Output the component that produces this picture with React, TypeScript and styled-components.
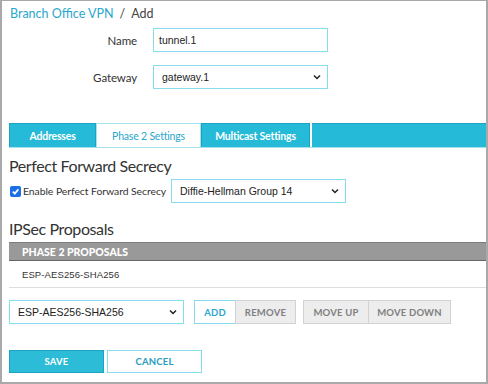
import React from "react";
import styled, { createGlobalStyle } from "styled-components";

const Global = createGlobalStyle`
  html, body { margin: 0; padding: 0; background: #fff; }
  body { font-family: Lato, "Liberation Sans", Arial, sans-serif; color: #333; }
  * { box-sizing: border-box; }
`;

const CYAN = "#25bad7";
const CYAN_DARK = "#1ba3c1";
const FIELD_BORDER = "#86dcec";

const Frame = styled.div`
  width: 488px;
  height: 384px;
  border: 2px solid #a9a9a9;
  border-top-width: 1px;
  padding-left: 7px;
  display: flex;
  flex-direction: column;
  overflow: hidden;
  & > * { flex-shrink: 0; }
`;

const Breadcrumb = styled.div`
  height: 24px;
  display: flex;
  align-items: center;
  gap: 6px;
  font-size: 12.5px;
  white-space: nowrap;
  padding-left: 1px;
`;

const Crumb = styled.span<{ $link?: boolean }>`
  color: ${(p) => (p.$link ? "#2aa7cc" : "#444")};
`;

const FormGrid = styled.div`
  display: grid;
  grid-template-columns: 128px 175px;
  column-gap: 16px;
  row-gap: 13px;
  margin-top: 3px;
`;

const Label = styled.label`
  font-size: 11.5px;
  letter-spacing: -0.1px;
  color: #333;
  text-align: right;
  align-self: center;
  white-space: nowrap;
`;

const TextInput = styled.div<{ $w?: number; $pl?: number }>`
  height: 24px;
  width: ${(p) => p.$w ?? 175}px;
  border: 1px solid ${FIELD_BORDER};
  display: flex;
  align-items: center;
  padding-left: ${(p) => p.$pl ?? 5}px;
  font-family: "Liberation Sans", Arial, sans-serif;
  font-size: 10.5px;
  color: #222;
  background: #fff;
  white-space: nowrap;
`;

const SelectBox = styled(TextInput)`
  justify-content: space-between;
  padding-right: 6px;
`;

const Chevron = () => (
  <svg width="8" height="6" viewBox="0 0 8 6">
    <path d="M1 1.5 L4 4.5 L7 1.5" fill="none" stroke="#222" strokeWidth="1.5" />
  </svg>
);

const Select: React.FC<{ value: string; w?: number; pl?: number }> = ({ value, w, pl }) => (
  <SelectBox $w={w} $pl={pl ?? 8}>
    <span>{value}</span>
    <Chevron />
  </SelectBox>
);

const TabBar = styled.div`
  margin-top: 34px;
  height: 25px;
  display: flex;
  border-bottom: 1px solid #a6e1ee;
`;

const Tab = styled.div<{ $active?: boolean; $w: number }>`
  width: ${(p) => p.$w}px;
  height: 24px;
  display: flex;
  align-items: center;
  justify-content: center;
  font-size: 10.5px;
  letter-spacing: -0.2px;
  font-weight: ${(p) => (p.$active ? 400 : 700)};
  color: ${(p) => (p.$active ? "#2aa7cc" : "#fff")};
  background: ${(p) => (p.$active ? "#fff" : CYAN)};
  border: 1px solid ${(p) => (p.$active ? "#a6e1ee" : CYAN_DARK)};
  border-bottom: none;
  white-space: nowrap;
`;

const TabFill = styled.div`
  flex: 1;
  height: 24px;
  margin-left: 2px;
  background: ${CYAN};
  border-top: 1px solid ${CYAN_DARK};
`;

const Heading = styled.h2<{ $mt: number }>`
  margin: ${(p) => p.$mt}px 0 0 0;
  font-size: 16px;
  letter-spacing: -0.4px;
  font-weight: 400;
  color: #333;
  line-height: 20px;
  white-space: nowrap;
`;

const PfsRow = styled.div`
  margin-top: 3px;
  display: flex;
  align-items: center;
`;

const CheckLabel = styled.label`
  display: flex;
  align-items: center;
  gap: 2px;
  font-size: 10.4px;
  letter-spacing: -0.05px;
  color: #333;
  width: 162px;
  white-space: nowrap;
  padding-left: 1px;
`;

const Check = styled.span`
  width: 11px;
  height: 11px;
  border-radius: 2px;
  background: #1a6ee8;
  display: inline-flex;
  align-items: center;
  justify-content: center;
  flex: none;
`;

const Table = styled.div`
  margin-top: 3px;
`;

const TableHead = styled.div`
  height: 19px;
  background: #999;
  border-top: 1px solid #7c7c7c;
  border-bottom: 1px solid #666;
  color: #fff;
  font-weight: 900;
  font-size: 10.5px;
  padding-left: 13px;
  display: flex;
  align-items: center;
`;

const TableRow = styled.div`
  height: 27px;
  border-bottom: 1px solid #ddd;
  display: flex;
  align-items: center;
  padding-left: 13px;
  font-family: "Liberation Sans", Arial, sans-serif;
  font-size: 9.5px;
  letter-spacing: 0.1px;
  color: #333;
`;

const Controls = styled.div`
  margin-top: 12px;
  display: flex;
  align-items: center;
`;

const Group = styled.div<{ $ml: number }>`
  display: flex;
  margin-left: ${(p) => p.$ml}px;
`;

const Btn = styled.div<{ $kind: "outline" | "gray"; $w: number }>`
  width: ${(p) => p.$w}px;
  height: 24px;
  display: flex;
  align-items: center;
  justify-content: center;
  font-size: 9.5px;
  letter-spacing: 0.2px;
  font-weight: 700;
  background: ${(p) => (p.$kind === "outline" ? "#fff" : "#ededed")};
  color: ${(p) => (p.$kind === "outline" ? "#2aa7cc" : "#808080")};
  border: 1px solid ${(p) => (p.$kind === "outline" ? FIELD_BORDER : "#d2d2d2")};
  & + & { margin-left: -1px; }
`;

const Footer = styled.div`
  margin-top: 26px;
  display: flex;
  gap: 3px;
`;

const FootBtn = styled.div<{ $primary?: boolean }>`
  width: 95px;
  height: 23px;
  display: flex;
  align-items: center;
  justify-content: center;
  font-size: 9.5px;
  letter-spacing: 0.2px;
  font-weight: 700;
  background: ${(p) => (p.$primary ? "#2cbcd7" : "#fff")};
  color: ${(p) => (p.$primary ? "#fff" : "#2a9cbf")};
  border: 1px solid ${(p) => (p.$primary ? CYAN_DARK : FIELD_BORDER)};
`;

export default function App() {
  return (
    <>
      <Global />
      <Frame>
        <Breadcrumb>
          <Crumb $link>Branch Office VPN</Crumb>
          <Crumb>/</Crumb>
          <Crumb>Add</Crumb>
        </Breadcrumb>
        <FormGrid>
          <Label>Name</Label>
          <TextInput>tunnel.1</TextInput>
          <Label>Gateway</Label>
          <Select value="gateway.1" />
        </FormGrid>
        <TabBar>
          <Tab $w={87}>Addresses</Tab>
          <Tab $w={105} $active>Phase 2 Settings</Tab>
          <Tab $w={109}>Multicast Settings</Tab>
          <TabFill />
        </TabBar>
        <Heading $mt={8}>Perfect Forward Secrecy</Heading>
        <PfsRow>
          <CheckLabel>
            <Check>
              <svg width="9" height="9" viewBox="0 0 10 10">
                <path d="M2 5.2 L4.2 7.4 L8.2 2.6" fill="none" stroke="#fff" strokeWidth="1.9" />
              </svg>
            </Check>
            Enable Perfect Forward Secrecy
          </CheckLabel>
          <Select value="Diffie-Hellman Group 14" />
        </PfsRow>
        <Heading $mt={16}>IPSec Proposals</Heading>
        <Table>
          <TableHead>PHASE 2 PROPOSALS</TableHead>
          <TableRow>ESP-AES256-SHA256</TableRow>
        </Table>
        <Controls>
          <Select value="ESP-AES256-SHA256" />
          <Group $ml={10}>
            <Btn $kind="outline" $w={42}>ADD</Btn>
            <Btn $kind="gray" $w={61}>REMOVE</Btn>
          </Group>
          <Group $ml={7}>
            <Btn $kind="gray" $w={66}>MOVE UP</Btn>
            <Btn $kind="gray" $w={83}>MOVE DOWN</Btn>
          </Group>
        </Controls>
        <Footer>
          <FootBtn $primary>SAVE</FootBtn>
          <FootBtn>CANCEL</FootBtn>
        </Footer>
      </Frame>
    </>
  );
}
